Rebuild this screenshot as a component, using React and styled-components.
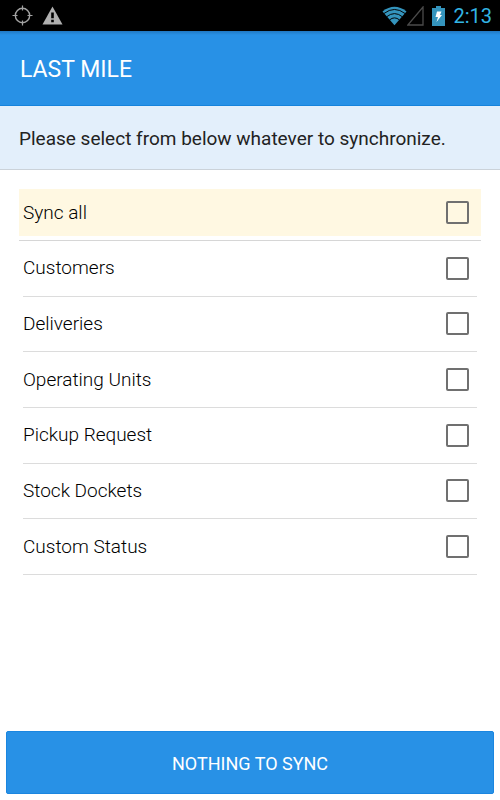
import React, { useState } from 'react'
import styled, { createGlobalStyle } from 'styled-components';


const GlobalStyle = createGlobalStyle`
    * {
        box-sizing:border-box;
    }
    body {
        margin:0;
        background-color:#fff;
        color:#000;
        font-family:Roboto, "Liberation Sans", sans-serif;
    }
`;

const Screen = styled.div`
    display:flex;
    flex-direction:column;
    min-height:100vh;
`;

const StatusBar = styled.div`
    display:flex;
    justify-content:space-between;
    align-items:center;
    height:31px;
    padding:0 8px 0 12px;
    background-color:#000;
`;

const StatusGroup = styled.div`
    display:flex;
    align-items:center;
    gap:8px;
`;

const Signals = styled.div`
    display:flex;
    align-items:center;
`;

const Clock = styled.time`
    padding-top:1px;
    font-size:20px;
    line-height:24px;
    color:#33b5e5;
`;

const AppBar = styled.header`
    display:flex;
    align-items:center;
    height:75px;
    padding:4px 20px 0;
    color:#fff;
    background:linear-gradient(#2078c2, #2891e6 4px);
    border-bottom:1px solid #1683dc;
`;

const Title = styled.h1`
    margin:0;
    font-size:23px;
    line-height:28px;
    font-weight:400;
`;

const Banner = styled.p`
    margin:0;
    padding:19px 19px 16px;
    font-size:19px;
    line-height:28px;
    color:#222;
    background-color:#e3effb;
    border-bottom:1px solid #cbd2d9;
`;

const Content = styled.main`
    flex:1;
    padding:19px 19px 0;
`;

const SyncAll = styled.div`
    padding-bottom:4px;
    border-bottom:1px solid #d6d6d6;
`;

const List = styled.ul`
    display:grid;
    grid-auto-rows:1fr;
    min-height:334px;
    margin:0;
    padding:0 4px;
    list-style:none;
`;

const Item = styled.li`
    display:flex;
    border-bottom:1px solid #dcdcdc;
`;

const Option = styled.label`
    display:flex;
    flex:1;
    justify-content:space-between;
    align-items:center;
    min-height:47px;
    padding:${({ $highlight }) => $highlight ? '0 12px 0 4px' : '0 8px 0 0'};
    font-size:19px;
    line-height:24px;
    font-weight:300;
    background-color:${({ $highlight }) => $highlight ? '#fff8e2' : 'transparent'};
    cursor:pointer;
`;

const Checkbox = styled.input`
    appearance:none;
    flex:none;
    width:23px;
    height:23px;
    margin:0;
    border:2px solid #707070;
    border-radius:2px;
    cursor:pointer;

    &:checked {
        background-color:#2891e6;
        border-color:#2891e6;
    }
`;

const Footer = styled.footer`
    padding:6px;
`;

const SyncButton = styled.button`
    display:block;
    width:100%;
    height:63px;
    padding:2px 0 0;
    font-family:inherit;
    font-size:18px;
    line-height:24px;
    color:#fff;
    background-color:#2891e6;
    border:1px solid #1a86e0;
    border-radius:2px;
    cursor:pointer;
`;

const LocationIcon = () => (
    <svg width="22" height="22" viewBox="0 0 22 22" fill="none" stroke="#a3a3a3">
        <circle cx="10.5" cy="10.5" r="7.2" strokeWidth="1.4" />
        <path d="M10.5 .5v5M10.5 15.5v5M.5 10.5h5M15.5 10.5h5" strokeWidth="1.2" />
    </svg>
)

const WarningIcon = () => (
    <svg width="21" height="19" viewBox="0 0 21 19">
        <path d="M10.5 .5L20.5 18.5H.5z" fill="#b0b0b0" />
        <path d="M9.2 6.5h2.6v5.8H9.2zM9.2 13.8h2.6v2.4H9.2z" fill="#000" />
    </svg>
)

const WifiIcon = () => (
    <svg width="25" height="20" viewBox="0 0 26 20">
        <path d="M13 19.5L.5 5.2Q13 -4.2 25.5 5.2z" fill="#3494bd" />
        <g fill="none" stroke="#000" strokeWidth="1">
            <path d="M2 7.4Q13 -1 24 7.4" />
            <path d="M4.8 10.8Q13 4.2 21.2 10.8" />
            <path d="M7.8 14.1Q13 9.8 18.2 14.1" />
        </g>
    </svg>
)

const SignalIcon = () => (
    <svg width="17" height="20" viewBox="0 0 17 20">
        <path d="M16 1v18H.8z" fill="none" stroke="#4b4b4b" strokeWidth="1.3" />
    </svg>
)

const BatteryIcon = () => (
    <svg width="13" height="20" viewBox="0 0 13 20">
        <path d="M4 0h5v2h4v18H0V2h4z" fill="#3494bd" />
        <path d="M5 5.5h4.5L8 9h2L4.5 16 6 11H3.5z" fill="#fff" />
    </svg>
)

const options = [
    'Customers',
    'Deliveries',
    'Operating Units',
    'Pickup Request',
    'Stock Dockets',
    'Custom Status',
];

const App = () => {
    const [selected, setSelected] = useState([]);

    const toggleOption = option => {
        setSelected(selected.includes(option)
            ? selected.filter(item => item !== option)
            : [...selected, option])
    };

    const allSelected = selected.length === options.length;

    const items = options.map(option => (
        <Item key={option}>
            <Option>
                {option}
                <Checkbox
                    type="checkbox"
                    checked={selected.includes(option)}
                    onChange={() => toggleOption(option)}
                />
            </Option>
        </Item>
    ))

    return (
        <>
            <GlobalStyle />
            <Screen>
                <StatusBar>
                    <StatusGroup>
                        <LocationIcon />
                        <WarningIcon />
                    </StatusGroup>
                    <StatusGroup>
                        <Signals>
                            <WifiIcon />
                            <SignalIcon />
                        </Signals>
                        <BatteryIcon />
                        <Clock>2:13</Clock>
                    </StatusGroup>
                </StatusBar>
                <AppBar>
                    <Title>LAST MILE</Title>
                </AppBar>
                <Banner>Please select from below whatever to synchronize.</Banner>
                <Content>
                    <SyncAll>
                        <Option $highlight>
                            Sync all
                            <Checkbox
                                type="checkbox"
                                checked={allSelected}
                                onChange={() => setSelected(allSelected ? [] : options)}
                            />
                        </Option>
                    </SyncAll>
                    <List>{items}</List>
                </Content>
                <Footer>
                    <SyncButton type="button">
                        {selected.length ? 'SYNC' : 'NOTHING TO SYNC'}
                    </SyncButton>
                </Footer>
            </Screen>
        </>
    )
}

export default App;
